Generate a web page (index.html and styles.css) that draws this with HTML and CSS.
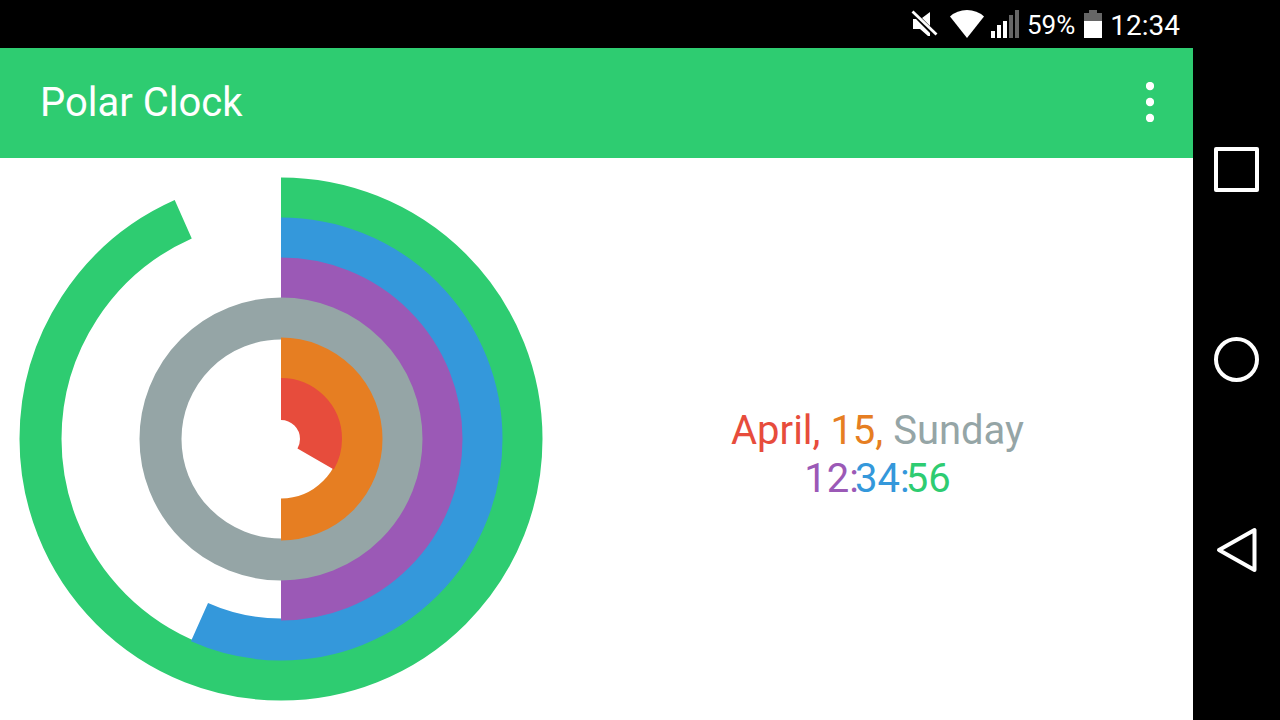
FILE: index.html
```html
<!DOCTYPE html>
<html lang="en">
<head>
<meta charset="utf-8">
<meta name="viewport" content="width=device-width, initial-scale=1">
<title>Polar Clock</title>
<link rel="stylesheet" href="styles.css">
</head>
<body>
<div class="device">
  <div class="screen">
    <div class="status-bar">
      <svg class="mute-icon" width="28" height="28" viewBox="0 0 28 28" aria-label="Muted" role="img">
        <path d="M2 9H5L19 23V26H17L9 19H2ZM11 8L19 2V16Z" fill="#fff"/>
        <path d="M1.500 1.500L25.500 24.500" stroke="#fff" stroke-width="2.800"/>
      </svg>
      <svg class="wifi-icon" width="34" height="28" viewBox="0 0 34 28" aria-label="Wi-Fi" role="img">
        <path d="M0 6.500Q7 0 17 0T34 6.500L17 28Z" fill="#fff"/>
      </svg>
      <svg class="signal-icon" width="28" height="28" viewBox="0 0 28 28" aria-label="Signal" role="img">
        <path d="M0 21h4v7H0zM6 15h4v13H6zM12 11h4v17h-4z" fill="#fff"/>
        <path d="M18 5h4v23h-4zM24 0h4v28h-4z" fill="#666"/>
      </svg>
      <span class="battery-level">59%</span>
      <svg class="battery-icon" width="18" height="28" viewBox="0 0 18 28" aria-label="Battery" role="img">
        <path d="M5 0h8v3h5v8H0V3h5z" fill="#666"/>
        <path d="M0 11h18v17H0z" fill="#fff"/>
      </svg>
      <time class="status-time">12:34</time>
    </div>
    <header class="app-bar">
      <h1 class="title">Polar Clock</h1>
      <button class="menu-button" type="button" aria-label="More options">
        <svg width="8" height="40" viewBox="0 0 8 40" fill="#fff"><circle cx="4" cy="4" r="4.200"/><circle cx="4" cy="20" r="4.200"/><circle cx="4" cy="36" r="4.200"/></svg>
      </button>
    </header>
    <main class="content">
      <svg class="polar-clock" viewBox="0 0 562 562" role="img" aria-label="Polar clock">
        <g fill="none" stroke-width="42" transform="rotate(-90 281 281)">
          <circle cx="281" cy="281" r="240.500" stroke="#2ecc71" pathLength="360" stroke-dasharray="336 24"/>
          <circle cx="281" cy="281" r="200.500" stroke="#3498db" pathLength="360" stroke-dasharray="204 156"/>
          <circle cx="281" cy="281" r="160.500" stroke="#9b59b6" pathLength="360" stroke-dasharray="180 180"/>
          <circle cx="281" cy="281" r="120.500" stroke="#95a5a6"/>
          <circle cx="281" cy="281" r="80.500" stroke="#e67e22" pathLength="360" stroke-dasharray="180 180"/>
          <circle cx="281" cy="281" r="40" stroke="#e74c3c" pathLength="360" stroke-dasharray="120 240"/>
        </g>
      </svg>
      <div class="readout">
        <div class="date"><span class="month">April, </span><span class="day">15, </span><span class="weekday">Sunday</span></div>
        <div class="time"><span class="hours">12:</span><span class="minutes">34:</span><span class="seconds">56</span></div>
      </div>
    </main>
  </div>
  <nav class="nav-bar">
    <button class="nav-button" type="button" aria-label="Recent apps">
      <svg width="45" height="45" viewBox="0 0 45 45"><rect x="2" y="2" width="41" height="41" class="nav-shape"/></svg>
    </button>
    <button class="nav-button" type="button" aria-label="Home">
      <svg width="45" height="45" viewBox="0 0 45 45"><circle cx="22.500" cy="22.500" r="20.500" class="nav-shape"/></svg>
    </button>
    <button class="nav-button" type="button" aria-label="Back">
      <svg width="45" height="45" viewBox="0 0 45 45"><path d="M5 23L40.500 3V43Z" class="nav-shape"/></svg>
    </button>
  </nav>
</div>
</body>
</html>
```

FILE: styles.css
```css
* {
  box-sizing: border-box;
}

body {
  margin: 0;
  background: #fff;
  font-family: Roboto, "Liberation Sans", sans-serif;
}

svg {
  display: block;
}

button {
  display: flex;
  align-items: center;
  justify-content: center;
  padding: 0;
  border: 0;
  background: transparent;
}

.device {
  display: flex;
  min-height: 100vh;
}

.screen {
  flex: 1;
  display: flex;
  flex-direction: column;
}

.status-bar {
  display: flex;
  align-items: center;
  justify-content: flex-end;
  height: 48px;
  padding-right: 13px;
  background: #000;
  color: #fff;
}

.mute-icon {
  margin-right: 11px;
}

.wifi-icon {
  margin-right: 7px;
}

.signal-icon {
  margin-right: 8px;
}

.battery-level {
  margin-right: 9px;
  padding-top: 2px;
  font-size: 26px;
  line-height: 28px;
}

.battery-icon {
  margin-right: 8px;
}

.status-time {
  padding-top: 4px;
  font-size: 28px;
  line-height: 28px;
}

.app-bar {
  display: flex;
  align-items: center;
  justify-content: space-between;
  height: 110px;
  padding: 0 19px 0 40px;
  background: #2ecc71;
  color: #fff;
}

.title {
  margin: 0;
  font-size: 40px;
  font-weight: 400;
  line-height: 48px;
}

.menu-button {
  width: 48px;
  height: 80px;
  padding-bottom: 2px;
}

.content {
  flex: 1;
  display: flex;
}

.polar-clock {
  height: calc(100vh - 158px);
  aspect-ratio: 1;
}

.readout {
  flex: 1;
  display: flex;
  flex-direction: column;
  align-items: center;
  justify-content: center;
  padding-top: 32px;
  font-size: 40px;
  line-height: 48px;
  white-space: pre;
}

.time span + span {
  margin-left: -4px;
}

.month {
  color: #e74c3c;
}

.day {
  color: #e67e22;
}

.weekday {
  color: #95a5a6;
}

.hours {
  color: #9b59b6;
}

.minutes {
  color: #3498db;
}

.seconds {
  color: #2ecc71;
}

.nav-bar {
  display: flex;
  flex-direction: column;
  align-items: stretch;
  justify-content: center;
  width: 87px;
  padding-bottom: 2px;
  background: #000;
}

.nav-button {
  height: 190px;
}

.nav-shape {
  fill: none;
  stroke: #fff;
  stroke-width: 4;
  stroke-linejoin: round;
}
```
